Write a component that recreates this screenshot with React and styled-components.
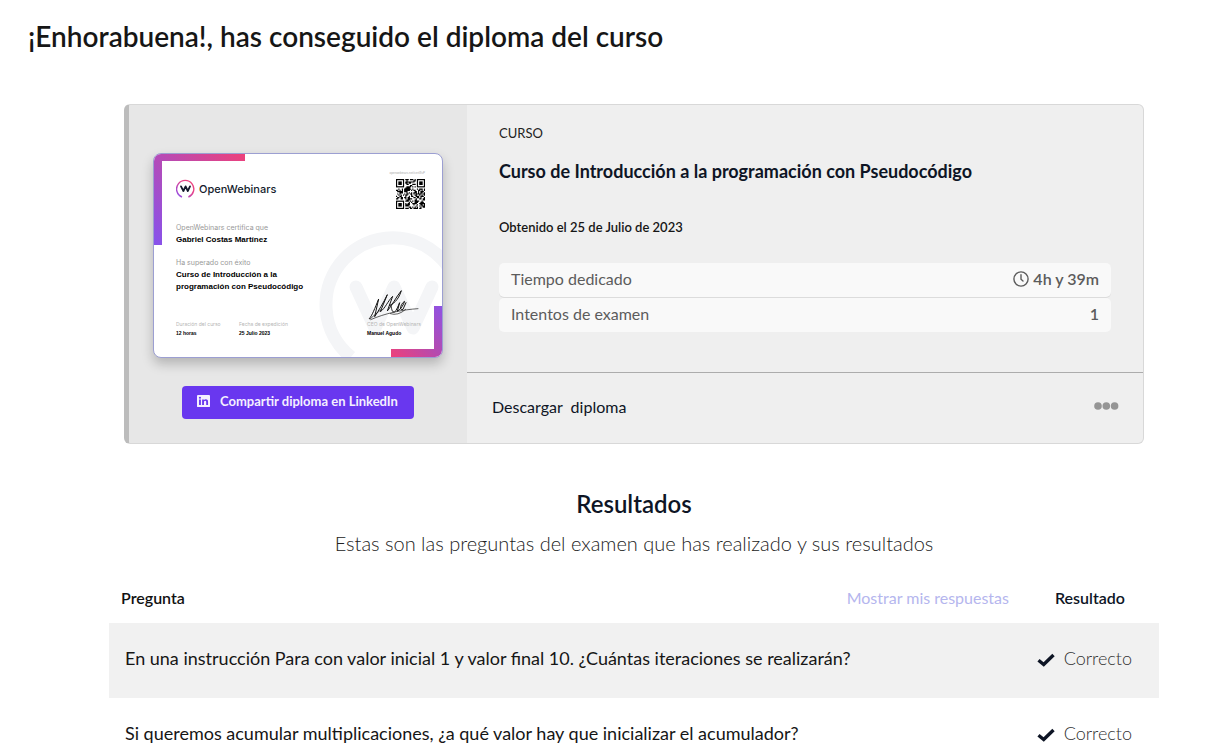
import React from "react";
import styled, { createGlobalStyle } from "styled-components";

const GlobalStyle = createGlobalStyle`
  * { box-sizing: border-box; }
  body {
    margin: 0;
    background: #fff;
    color: #0e1525;
    font-family: Lato, "Liberation Sans", sans-serif;
    font-size: 16px;
  }
  h1, h2, h3, p, dl, dd { margin: 0; }
  button { font-family: inherit; cursor: pointer; }
`;

const Page = styled.main`
  padding: 16px 70px 0 28px;
`;

const PageTitle = styled.h1`
  font-size: 28px;
  line-height: 40px;
  font-weight: 600;
  color: #161616;
`;

const Content = styled.div`
  margin: 48px 0 0 81px;
`;

const Card = styled.article`
  display: grid;
  grid-template-columns: 338px 1fr;
  margin: 0 15px;
  border: 1px solid #d8d8d8;
  border-left: 5px solid #bcbcbc;
  border-radius: 6px;
  background: #efefef;
  overflow: hidden;
`;

const DiplomaPane = styled.div`
  display: flex;
  flex-direction: column;
  align-items: center;
  gap: 28px;
  padding: 48px 24px 24px;
  background: #e7e7e7;
`;

const Diploma = styled.div`
  position: relative;
  width: 290px;
  height: 205px;
  padding: 26px 17px 0 22px;
  border: 1px solid #9c9fd2;
  border-radius: 8px;
  background: #fff;
  box-shadow: 0 6px 12px rgba(0, 0, 0, 0.22);
  overflow: hidden;
  color: #000;
  font-family: "Liberation Sans", sans-serif;
`;

const DiplomaArt = styled.svg`
  position: absolute;
  inset: 0;
  width: 100%;
  height: 100%;
`;

const DiplomaBody = styled.div`
  position: relative;
`;

const DiplomaTop = styled.div`
  display: flex;
  justify-content: space-between;
  height: 42px;
`;

const Brand = styled.div`
  display: flex;
  gap: 3px;
  height: 18px;
  align-items: center;
  font-family: Inter, sans-serif;
  font-size: 11px;
  font-weight: 500;
  color: #141b2c;
`;

const DiplomaCaption = styled.p`
  font-family: Inter, sans-serif;
  font-size: 7px;
  line-height: 12px;
  color: #999;
`;

const DiplomaStrong = styled.p`
  font-size: 8px;
  line-height: 12px;
  font-weight: 700;
  margin-bottom: ${(p) => (p.$gap ? p.$gap : 0)}px;
`;

const DiplomaFooter = styled.div`
  display: grid;
  grid-template-columns: 63px 128px 1fr;
  font-size: 5px;
  line-height: 9px;
  white-space: nowrap;

  span { display: block; color: #b5b5b5; font-family: Inter, sans-serif; }
  strong { display: block; }
`;

const ShareButton = styled.button`
  display: flex;
  align-items: center;
  gap: 10px;
  height: 33px;
  padding: 0 16px 3px 15px;
  border: 0;
  border-radius: 4px;
  background: #6937ef;
  color: #f4efff;
  font-size: 13px;
  font-weight: 700;
`;

const Details = styled.div`
  display: flex;
  flex-direction: column;
`;

const CourseInfo = styled.div`
  flex: 1;
  padding: 20px 32px 40px;
`;

const Kind = styled.p`
  font-size: 13px;
  line-height: 16px;
  color: #222;
`;

const CourseTitle = styled.h2`
  margin-top: 16px;
  font-size: 18px;
  line-height: 28px;
  font-weight: 700;
`;

const Obtained = styled.p`
  margin: 34px 0 28px;
  font-size: 13px;
  line-height: 16px;
  font-weight: 600;
  color: #161616;
`;

const Stats = styled.dl`
  display: grid;
  gap: 1px;
`;

const Stat = styled.div`
  display: flex;
  align-items: center;
  justify-content: space-between;
  height: 34px;
  padding: 0 12px 3px;
  border-radius: 5px;
  background: #f9f9f9;
  box-shadow: 0 1px 0 ${(p) => (p.$divided ? "#dcdcdc" : "transparent")};
  color: #5c5c5c;

  dd {
    display: flex;
    align-items: center;
    gap: 4px;
    font-weight: 600;
  }
`;

const Actions = styled.div`
  display: flex;
  align-items: center;
  justify-content: space-between;
  height: 71px;
  padding: 0 24px 4px 25px;
  border-top: 1px solid #acacac;
`;

const DownloadLink = styled.a`
  color: #0e1525;
  text-decoration: none;
  white-space: pre;
`;

const MoreButton = styled.button`
  display: flex;
  padding: 0;
  border: 0;
  background: none;
`;

const ResultsTitle = styled.h2`
  margin-top: 42px;
  font-size: 24px;
  line-height: 36px;
  font-weight: 600;
  text-align: center;
`;

const ResultsText = styled.p`
  margin: 7px 0 26px;
  font-size: 20px;
  line-height: 28px;
  font-weight: 300;
  text-align: center;
  color: #222;
`;

const ResultsTable = styled.table`
  width: 100%;
  border-collapse: collapse;

  th { height: 40px; padding: 0 0 12px 12px; font-weight: 600; text-align: left; }
  th + th { width: 150px; padding: 0 34px 12px 0; text-align: right; }
`;

const HeadCell = styled.div`
  display: flex;
  align-items: center;
  justify-content: space-between;
  color: #111;
`;

const ShowAnswers = styled.button`
  padding: 0;
  border: 0;
  background: none;
  color: #b5b6ee;
  font-size: 16px;
`;

const Row = styled.tr`
  height: 75px;
  background: ${(p) => (p.$shaded ? "#f1f1f1" : "#fff")};

  td { padding: 0 27px 6px 16px; font-size: 18px; line-height: 24px; color: #161616; }
  td + td { padding-left: 0; }
`;

const Verdict = styled.div`
  display: flex;
  align-items: center;
  justify-content: flex-end;
  gap: 8px;
  font-weight: 300;
  color: #333;

  svg { margin-top: 4px; }
`;

const BrandMark = () => (
  <svg width="20" height="20" viewBox="0 0 20 20" fill="none" aria-hidden="true">
    <defs>
      <linearGradient id="mark" x1="0" y1="1" x2="1" y2="0">
        <stop offset="0" stopColor="#8a50ef" />
        <stop offset=".6" stopColor="#e5438c" />
        <stop offset="1" stopColor="#ef4478" />
      </linearGradient>
    </defs>
    <path d="M6 18A8.600 8.600 0 1 1 12.400 18" stroke="url(#mark)" strokeWidth="1.400" />
    <path d="M5 7.400L7.400 12L9.600 7.400L11.800 12L14 7.400" stroke="#141b2c" strokeWidth="1.800" strokeLinejoin="round" strokeLinecap="round" />
  </svg>
);

const SIZE = 25;
const inFinder = (x, y) =>
  (x < 8 && y < 8) || (x > SIZE - 9 && y < 8) || (x < 8 && y > SIZE - 9);

const qrModules = (() => {
  let seed = 77;
  let d = "";
  for (let y = 0; y < SIZE; y += 1) {
    for (let x = 0; x < SIZE; x += 1) {
      seed = (seed * 1103515245 + 12345) % 2147483648;
      if (!inFinder(x, y) && seed / 2147483648 > 0.46) d += `M${x} ${y}h1v1h-1z`;
    }
  }
  return d;
})();

const QrCode = () => (
  <svg width="29" height="30" viewBox="0 0 25 25" preserveAspectRatio="none" aria-hidden="true">
    <path d={qrModules} />
    {[[0, 0], [18, 0], [0, 18]].map(([x, y]) => (
      <g key={`${x}-${y}`}>
        <rect x={x + 0.5} y={y + 0.5} width="6" height="6" fill="none" stroke="#000" />
        <rect x={x + 2} y={y + 2} width="3" height="3" />
      </g>
    ))}
  </svg>
);

const QrBlock = styled.div`
  display: flex;
  flex-direction: column;
  align-items: flex-end;
  gap: 4px;
  margin-top: -9px;
  color: #aaa;
  font-size: 3px;
  line-height: 4px;
`;

const DiplomaDrawing = () => (
  <DiplomaArt viewBox="0 0 288 203" preserveAspectRatio="none" aria-hidden="true">
    <defs>
      <linearGradient id="cornerA" gradientUnits="userSpaceOnUse" x1="0" y1="91" x2="91" y2="0">
        <stop offset="0" stopColor="#8652ec" />
        <stop offset=".5" stopColor="#b44bb8" />
        <stop offset="1" stopColor="#ee417a" />
      </linearGradient>
      <linearGradient id="cornerB" gradientUnits="userSpaceOnUse" x1="237" y1="203" x2="288" y2="152">
        <stop offset="0" stopColor="#ee417a" />
        <stop offset=".5" stopColor="#b44bb0" />
        <stop offset="1" stopColor="#8f52e4" />
      </linearGradient>
    </defs>
    <g fill="none" stroke="#f4f5f7" strokeWidth="13">
      <path d="M197 203A67 67 0 1 1 281 203" />
      <path d="M202 133L221 174L240 133L259 174L278 133" strokeLinecap="round" strokeLinejoin="round" />
    </g>
    <path d="M0 0H91V7H8V91H0Z" fill="url(#cornerA)" />
    <path d="M288 152V203H237V195H280V152Z" fill="url(#cornerB)" />
    <g transform="translate(141 96) scale(.3333)" fill="none" stroke="#151515" strokeWidth="3" strokeLinejoin="round" strokeLinecap="round">
      <path d="M223 206C231 198 240 174 251 147L239 200C253 178 264 161 277 134L256 185C270 176 278 154 293 139L277 183C292 165 302 143 319 122C310 152 293 163 283 166C293 165 286 185 298 187C305 181 310 167 314 158L307 184C318 178 326 163 329 154C316 161 312 184 324 178L333 158" />
      <path d="M227 209C270 190 322 179 369 176M225 207L259 178M286 191Q309 199 332 178" strokeWidth="2" />
    </g>
  </DiplomaArt>
);

const ClockIcon = () => (
  <svg width="16" height="16" viewBox="0 0 16 16" fill="none" stroke="#5c5c5c" strokeWidth="1.400" strokeLinecap="round" aria-hidden="true">
    <circle cx="8" cy="8" r="7.100" />
    <path d="M8 3.800V8.200L10 10" />
  </svg>
);

const LinkedInIcon = () => (
  <svg width="13" height="12" viewBox="0 0 14 14" preserveAspectRatio="none" aria-hidden="true">
    <rect width="14" height="14" rx="1" fill="#f4efff" />
    <g fill="#6937ef">
      <circle cx="3.200" cy="3.200" r="1.150" />
      <path d="M2.200 5.300h2v6.500h-2zM5.500 5.300h1.900v.9c.4-.7 1.100-1.100 2-1.100 2 0 2.500 1.300 2.500 3.100v3.600h-2V8.600c0-.9 0-1.800-1.100-1.800S7.500 7.700 7.500 8.500v3.300h-2z" />
    </g>
  </svg>
);

const CheckIcon = () => (
  <svg width="19" height="14" viewBox="0 0 19 14" fill="none" aria-hidden="true">
    <path d="M1.500 7.200L6.700 11.500L16.500 2" stroke="#0e1525" strokeWidth="3.400" />
  </svg>
);

const DotsIcon = () => (
  <svg width="25" height="8" viewBox="0 0 25 8" fill="#959595" aria-hidden="true">
    <circle cx="4" cy="4" r="3.800" />
    <circle cx="12.300" cy="4" r="3.800" />
    <circle cx="20.600" cy="4" r="3.800" />
  </svg>
);

const results = [
  "En una instrucción Para con valor inicial 1 y valor final 10. ¿Cuántas iteraciones se realizarán?",
  "Si queremos acumular multiplicaciones, ¿a qué valor hay que inicializar el acumulador?",
];

export default function App() {
  return (
    <>
      <GlobalStyle />
      <Page>
        <PageTitle>¡Enhorabuena!, has conseguido el diploma del curso</PageTitle>
        <Content>
          <Card>
            <DiplomaPane>
              <Diploma>
                <DiplomaDrawing />
                <DiplomaBody>
                  <DiplomaTop>
                    <Brand><BrandMark />OpenWebinars</Brand>
                    <QrBlock>openwebinars.net/cert/8sP<QrCode /></QrBlock>
                  </DiplomaTop>
                  <DiplomaCaption>OpenWebinars certifica que</DiplomaCaption>
                  <DiplomaStrong $gap={11}>Gabriel Costas Martínez</DiplomaStrong>
                  <DiplomaCaption>Ha superado con éxito</DiplomaCaption>
                  <DiplomaStrong $gap={27}>Curso de Introducción a la<br />programación con Pseudocódigo</DiplomaStrong>
                  <DiplomaFooter>
                    <div><span>Duración del curso</span><strong>12 horas</strong></div>
                    <div><span>Fecha de expedición</span><strong>25 Julio 2023</strong></div>
                    <div><span>CEO de OpenWebinars</span><strong>Manuel Agudo</strong></div>
                  </DiplomaFooter>
                </DiplomaBody>
              </Diploma>
              <ShareButton type="button"><LinkedInIcon />Compartir diploma en LinkedIn</ShareButton>
            </DiplomaPane>
            <Details>
              <CourseInfo>
                <Kind>CURSO</Kind>
                <CourseTitle>Curso de Introducción a la programación con Pseudocódigo</CourseTitle>
                <Obtained>Obtenido el 25 de Julio de 2023</Obtained>
                <Stats>
                  <Stat $divided><dt>Tiempo dedicado</dt><dd><ClockIcon />4h y 39m</dd></Stat>
                  <Stat><dt>Intentos de examen</dt><dd>1</dd></Stat>
                </Stats>
              </CourseInfo>
              <Actions>
                <DownloadLink href="#diploma">Descargar  diploma</DownloadLink>
                <MoreButton type="button" aria-label="Más opciones"><DotsIcon /></MoreButton>
              </Actions>
            </Details>
          </Card>
          <ResultsTitle>Resultados</ResultsTitle>
          <ResultsText>Estas son las preguntas del examen que has realizado y sus resultados</ResultsText>
          <ResultsTable>
            <thead>
              <tr>
                <th><HeadCell>Pregunta<ShowAnswers type="button">Mostrar mis respuestas</ShowAnswers></HeadCell></th>
                <th>Resultado</th>
              </tr>
            </thead>
            <tbody>
              {results.map((question, i) => (
                <Row key={question} $shaded={i % 2 === 0}>
                  <td>{question}</td>
                  <td><Verdict><CheckIcon />Correcto</Verdict></td>
                </Row>
              ))}
            </tbody>
          </ResultsTable>
        </Content>
      </Page>
    </>
  );
}
